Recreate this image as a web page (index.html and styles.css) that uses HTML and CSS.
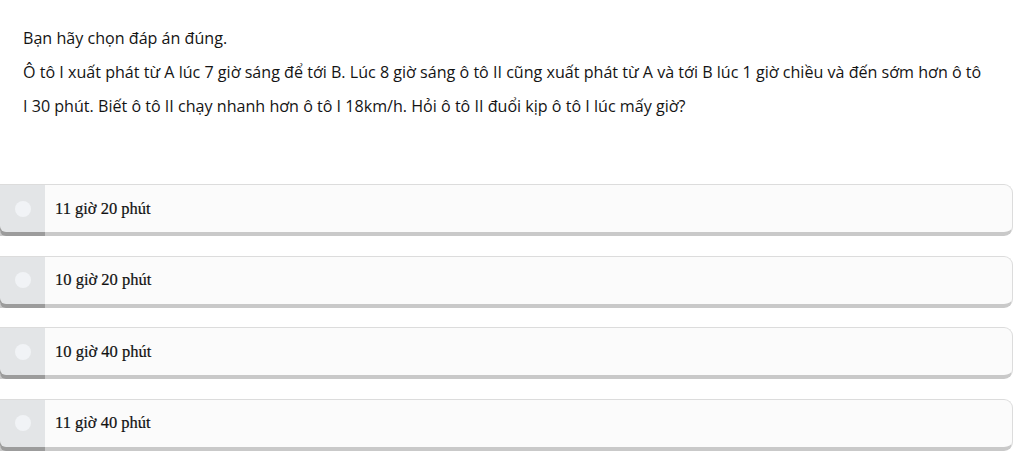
FILE: index.html
```html
<!DOCTYPE html>
<html lang="vi">
<head>
<meta charset="utf-8">
<link rel="stylesheet" href="styles.css">
</head>
<body>
<div class="page">
  <div class="question">
    <p>Bạn hãy chọn đáp án đúng.</p>
    <p>Ô tô I xuất phát từ A lúc 7 giờ sáng để tới B. Lúc 8 giờ sáng ô tô II cũng xuất phát từ A và tới B lúc 1 giờ chiều và đến sớm hơn ô tô I 30 phút. Biết ô tô II chạy nhanh hơn ô tô I 18km/h. Hỏi ô tô II đuổi kịp ô tô I lúc mấy giờ?</p>
  </div>
  <div class="options">
    <div class="option"><div class="radio-col"><span class="radio"></span></div><div class="label">11 giờ 20 phút</div></div>
    <div class="option"><div class="radio-col"><span class="radio"></span></div><div class="label">10 giờ 20 phút</div></div>
    <div class="option"><div class="radio-col"><span class="radio"></span></div><div class="label">10 giờ 40 phút</div></div>
    <div class="option"><div class="radio-col"><span class="radio"></span></div><div class="label">11 giờ 40 phút</div></div>
  </div>
</div>
</body>
</html>
```
FILE: styles.css
```css
html, body {
  margin: 0;
  padding: 0;
  background: #ffffff;
}
.page {
  width: 1024px;
  height: 462px;
  overflow: hidden;
}
.question {
  padding: 21px 37px 0 23px;
  font-family: "Open Sans", "Noto Sans", sans-serif;
  font-size: 16.1px;
  line-height: 34px;
  color: #141414;
}
.question p {
  margin: 0;
}
.options {
  margin-top: 61px;
  display: flex;
  flex-direction: column;
  gap: 19.5px;
  width: 1013px;
}
.option {
  display: flex;
  height: 47px;
  border: 1px solid #dcdcdc;
  border-bottom: 4px solid #c9c9c9;
  border-left: none;
  border-radius: 0 9px 9px 0;
  background: #fbfbfb;
  position: relative;
}
.radio-col {
  width: 45px;
  flex: none;
  background: #e3e5e7;
  display: flex;
  align-items: center;
  justify-content: center;
  border-radius: 0 0 0 6px;
  box-shadow: 0 4px 0 #9c9c9c;
}
.radio {
  width: 16px;
  height: 16px;
  border-radius: 50%;
  background: #f1f3f6;
}
.label {
  padding-left: 10px;
  display: flex;
  align-items: center;
  font-family: "Liberation Serif", serif;
  font-size: 16.5px;
  color: #111111;
  -webkit-text-stroke: 0.2px #111111;
}
```
